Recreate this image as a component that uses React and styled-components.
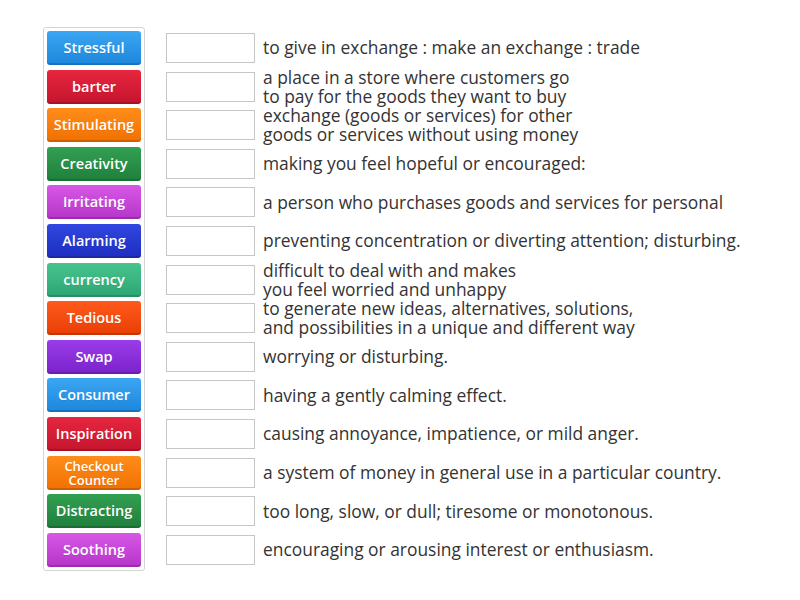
import React from 'react'
import styled, { createGlobalStyle } from 'styled-components'

const palette = {
  blue: ['#3ba6f2', '#1c87dc'],
  red: ['#e7263f', '#c4152d'],
  orange: ['#ff8d1a', '#f07000'],
  green: ['#32a052', '#1f7f3c'],
  magenta: ['#d758e6', '#b535c8'],
  navy: ['#3147e0', '#1d2ec0'],
  teal: ['#47c48e', '#2ea574'],
  vermilion: ['#ff5a1c', '#e83e05'],
  purple: ['#9a3ce8', '#7a22cc'],
}

const words = [
  ['Stressful', 'blue'],
  ['barter', 'red'],
  ['Stimulating', 'orange'],
  ['Creativity', 'green'],
  ['Irritating', 'magenta'],
  ['Alarming', 'navy'],
  ['currency', 'teal'],
  ['Tedious', 'vermilion'],
  ['Swap', 'purple'],
  ['Consumer', 'blue'],
  ['Inspiration', 'red'],
  ['Checkout Counter', 'orange'],
  ['Distracting', 'green'],
  ['Soothing', 'magenta'],
]

const definitions = [
  ['to give in exchange : make an exchange : trade'],
  ['a place in a store where customers go', 'to pay for the goods they want to buy'],
  ['exchange (goods or services) for other', 'goods or services without using money'],
  ['making you feel hopeful or encouraged:'],
  ['a person who purchases goods and services for personal'],
  ['preventing concentration or diverting attention; disturbing.'],
  ['difficult to deal with and makes', 'you feel worried and unhappy'],
  ['to generate new ideas, alternatives, solutions,', 'and possibilities in a unique and different way'],
  ['worrying or disturbing.'],
  ['having a gently calming effect.'],
  ['causing annoyance, impatience, or mild anger.'],
  ['a system of money in general use in a particular country.'],
  ['too long, slow, or dull; tiresome or monotonous.'],
  ['encouraging or arousing interest or enthusiasm.'],
]

const App = () => {
  return (
    <>
      <GlobalStyle />
      <Page>
        <Panel>
          {words.map(([label, color]) => (
            <WordButton key={label} tone={color} small={label.includes(' ')}>
              {label}
            </WordButton>
          ))}
        </Panel>
        <Answers>
          {definitions.map((lines, i) => (
            <Row key={i}>
              <DropBox />
              <Definition>
                {lines.map((line, j) => (
                  <span key={j}>{line}</span>
                ))}
              </Definition>
            </Row>
          ))}
        </Answers>
      </Page>
    </>
  )
}

const GlobalStyle = createGlobalStyle`
  body {
    margin: 0;
    background: #fff;
    font-family: "Open Sans", "Liberation Sans", sans-serif;
  }
`
const Page = styled.div`
  display: flex;
  align-items: flex-start;
  gap: 21px;
  padding: 27px 0 0 43px;
`
const Panel = styled.div`
  display: flex;
  flex-direction: column;
  gap: 4.6px;
  padding: 3px;
  border: 1px solid #d4d4d4;
  border-radius: 3px;
`
const WordButton = styled.div`
  width: 94px;
  height: 34px;
  box-sizing: border-box;
  display: flex;
  align-items: center;
  justify-content: center;
  text-align: center;
  border-radius: 3px;
  color: #fff;
  font-weight: 600;
  font-size: ${p => (p.small ? '13px' : '14.5px')};
  line-height: ${p => (p.small ? '14px' : '16px')};
  padding: 0 3px;
  background: linear-gradient(
    ${p => palette[p.tone][0]},
    ${p => palette[p.tone][1]}
  );
  box-shadow: inset 0 -2px 0 rgba(0, 0, 0, 0.15);
  text-shadow: 0 1px 0 rgba(0, 0, 0, 0.08);
`
const Answers = styled.div`
  display: flex;
  flex-direction: column;
  padding-top: 1.7px;
`
const Row = styled.div`
  height: 38.6px;
  display: flex;
  align-items: center;
  gap: 8px;
`
const DropBox = styled.div`
  width: 89px;
  height: 30px;
  box-sizing: border-box;
  border: 1px solid #c6c6c6;
  background: #fff;
  flex-shrink: 0;
`
const Definition = styled.div`
  display: flex;
  flex-direction: column;
  font-size: 17.4px;
  line-height: 19px;
  color: #333;
  white-space: nowrap;
`

export default App
